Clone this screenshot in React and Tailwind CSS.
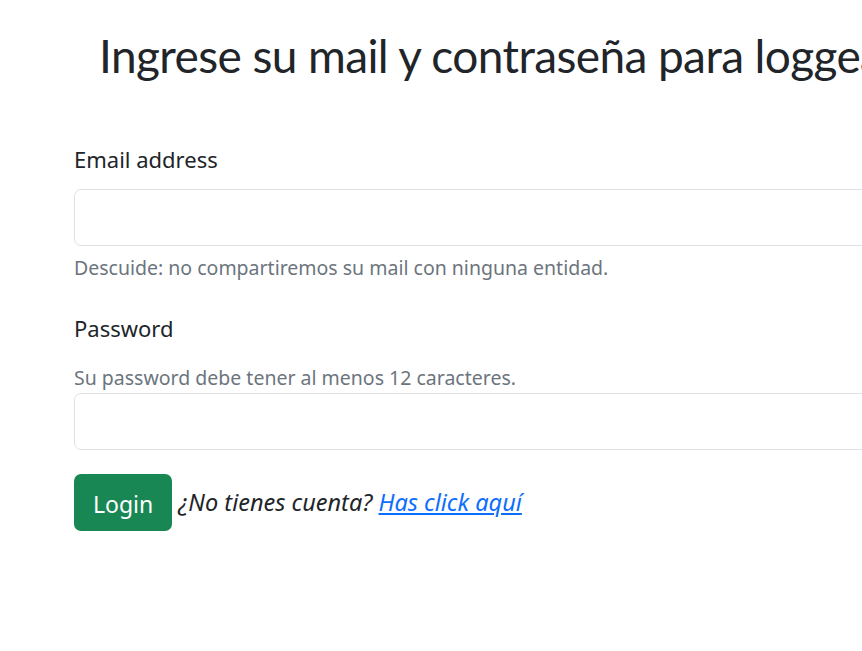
export default function App() {
  return (
    <div className="w-full min-h-screen bg-white overflow-hidden font-['Noto_Sans',sans-serif] text-[#212529]">
      <div className="w-[1100px]">
        <h1 className="pl-[99px] pt-[26px] text-[46px] leading-[60px] tracking-[-0.6px] font-['Lato',sans-serif] font-normal whitespace-nowrap">
          Ingrese su mail y contraseña para loggearse
        </h1>

        <form className="pl-[74px] pt-[57px]">
          <div className="mb-[30px]">
            <label className="block text-[22px] leading-[33px] mb-[13px]">Email address</label>
            <input
              type="email"
              className="block w-full h-[57px] border border-[#dee2e6] rounded-[7px] px-4 outline-none"
            />
            <div className="mt-[7px] text-[19.5px] leading-[29px] text-[#6c757d]">
              Descuide: no compartiremos su mail con ninguna entidad.
            </div>
          </div>

          <div className="mb-[24px]">
            <label className="block text-[22px] leading-[33px] mb-[18px]">Password</label>
            <div className="text-[19.5px] leading-[29px] text-[#6c757d] mb-[1px]">
              Su password debe tener al menos 12 caracteres.
            </div>
            <input
              type="password"
              className="block w-full h-[57px] border border-[#dee2e6] rounded-[7px] px-4 outline-none"
            />
          </div>

          <div className="flex items-center">
            <button
              type="button"
              className="h-[57px] px-[19px] pt-[3px] bg-[#198754] text-white text-[23px] rounded-[7px]"
            >
              Login
            </button>
            <span className="ml-[6px] text-[23.5px] italic">
              ¿No tienes cuenta?{" "}
              <a href="#" className="text-[#0d6efd] underline">
                Has click aquí
              </a>
            </span>
          </div>
        </form>
      </div>
    </div>
  );
}
